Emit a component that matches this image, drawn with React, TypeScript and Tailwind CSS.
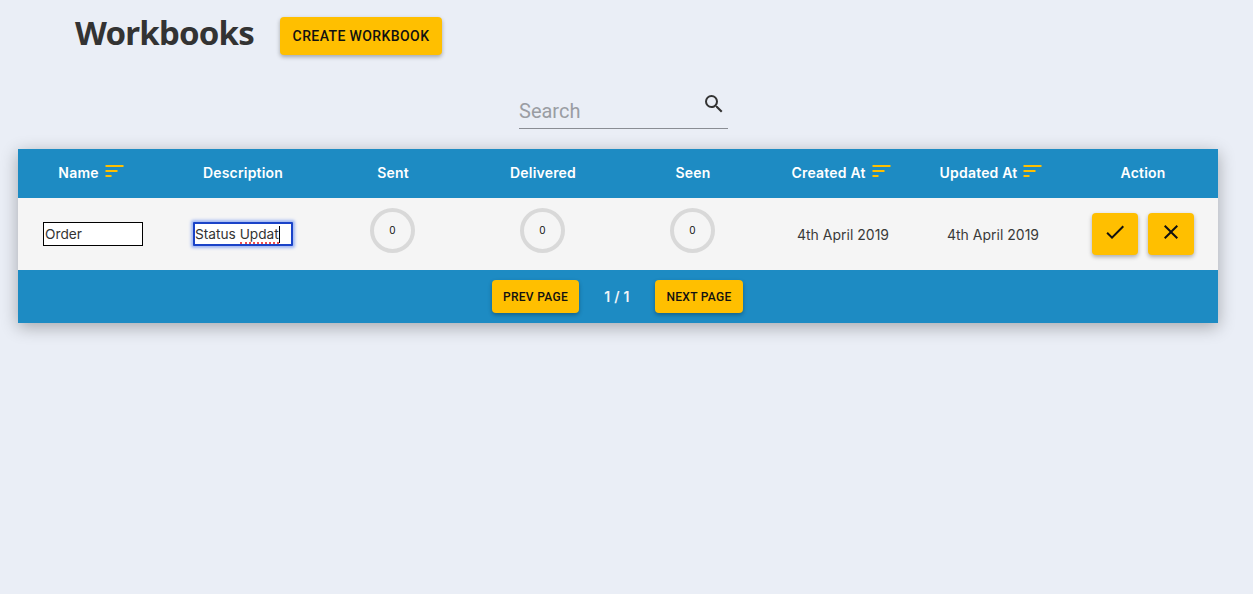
import { MdSearch, MdCheck, MdClose } from "react-icons/md";

const amberShadow = "shadow-[0_2px_4px_rgba(0,0,0,0.3)]";

function SortIcon() {
  return (
    <svg width="19" height="14" viewBox="0 0 19 14" className="ml-[6px] -mt-[3px] shrink-0">
      <rect x="0.5" y="0" width="18" height="2" fill="#ffbf00" />
      <rect x="0.5" y="5" width="12" height="2" fill="#ffbf00" />
      <rect x="0.5" y="10" width="6" height="2" fill="#ffbf00" />
    </svg>
  );
}

function HeadCell({ label, sort }: { label: string; sort?: boolean }) {
  return (
    <div className={`flex w-[150px] items-center justify-center text-[14px] font-semibold tracking-[0.2px] text-white ${sort ? "pr-[4px]" : ""}`}>
      <span className="pb-[2px]">{label}</span>
      {sort && <SortIcon />}
    </div>
  );
}

function Ring() {
  return (
    <div className="flex w-[150px] justify-center pr-[1px]">
      <div className="mb-[7px] flex h-[45px] w-[45px] items-center justify-center rounded-full border-4 border-[#d9d9d9] text-[10px] text-[#111]">
        0
      </div>
    </div>
  );
}

function DateCell() {
  return <div className="w-[150px] text-center text-[14px] text-[#3a3a3a]">4th April 2019</div>;
}

export default function App() {
  return (
    <div className="h-[594px] overflow-hidden bg-[#eaeef6] font-['Inter',sans-serif]">
      {/* Titel + Button */}
      <div className="flex items-center pl-[75px] pt-[17px]">
        <h1 className="h-[38px] w-[205px] font-['Noto_Sans',sans-serif] text-[33px] leading-[32px] font-bold tracking-[-0.8px] text-[#333]">
          Workbooks
        </h1>
        <button className={`h-[38px] w-[162px] rounded bg-[#ffbf00] font-['Roboto',sans-serif] text-[14px] font-medium tracking-[0.4px] text-[#111] ${amberShadow}`}>
          CREATE WORKBOOK
        </button>
      </div>

      {/* Suche */}
      <div className="mt-[32px] flex justify-center pr-[6px]">
        <div className="relative h-[42px] w-[209px] border-b border-[#8a8d94]">
          <input
            placeholder="Search"
            className="absolute top-[9px] left-0 w-[170px] bg-transparent font-['Roboto',sans-serif] text-[20px] outline-none placeholder:text-[#9a9da3]"
          />
          <MdSearch size={24} className="absolute top-[5px] right-[2px] text-[#333]" />
        </div>
      </div>

      {/* Tabelle */}
      <div className="mt-[20px] ml-[18px] w-[1200px] shadow-[0_4px_16px_rgba(0,0,0,0.3)]">
        <div className="flex h-[49px] items-center bg-[#1d8bc3]">
          <HeadCell label="Name" sort />
          <HeadCell label="Description" />
          <HeadCell label="Sent" />
          <HeadCell label="Delivered" />
          <HeadCell label="Seen" />
          <HeadCell label="Created At" sort />
          <HeadCell label="Updated At" sort />
          <HeadCell label="Action" />
        </div>

        <div className="flex h-[72px] items-center bg-[#f5f5f5]">
          <div className="flex w-[150px] justify-center">
            <input
              defaultValue="Order"
              className="h-[24px] w-[100px] border border-black bg-white px-[1px] text-[13.7px] text-[#333] outline-none"
            />
          </div>
          <div className="flex w-[150px] justify-center">
            <div className="flex h-[24px] w-[100px] items-center rounded-[1px] border-2 border-[#1a43c8] bg-white text-[13.7px] whitespace-nowrap text-[#333] shadow-[0_0_3px_2px_rgba(90,130,240,0.55)]">
              <span>Status&nbsp;</span>
              <span className="mt-[2px] inline-block h-[18px] border-b-2 border-dotted border-[#f05050] leading-[16px]">Updat</span>
              <span className="h-[17px] w-px bg-black" />
            </div>
          </div>
          <Ring />
          <Ring />
          <Ring />
          <DateCell />
          <DateCell />
          <div className="flex w-[150px] justify-center gap-[10px]">
            <button className={`flex h-[42px] w-[46px] items-center justify-center rounded bg-[#ffbf00] text-[#111] ${amberShadow}`}>
              <MdCheck size={24} className="-mt-[5px]" />
            </button>
            <button className={`flex h-[42px] w-[46px] items-center justify-center rounded bg-[#ffbf00] text-[#111] ${amberShadow}`}>
              <MdClose size={24} className="-mt-[5px]" />
            </button>
          </div>
        </div>

        <div className="flex h-[53px] items-center justify-center bg-[#1d8bc3] pr-[1px]">
          <button className={`h-[33px] w-[87px] rounded bg-[#ffbf00] font-['Roboto',sans-serif] text-[12px] font-medium tracking-[0.3px] text-[#111] ${amberShadow}`}>
            PREV PAGE
          </button>
          <span className="w-[76px] text-center text-[14px] font-semibold tracking-[0.3px] text-[#f0f4f8]">1 / 1</span>
          <button className={`h-[33px] w-[88px] rounded bg-[#ffbf00] font-['Roboto',sans-serif] text-[12px] font-medium tracking-[0.3px] text-[#111] ${amberShadow}`}>
            NEXT PAGE
          </button>
        </div>
      </div>
    </div>
  );
}
